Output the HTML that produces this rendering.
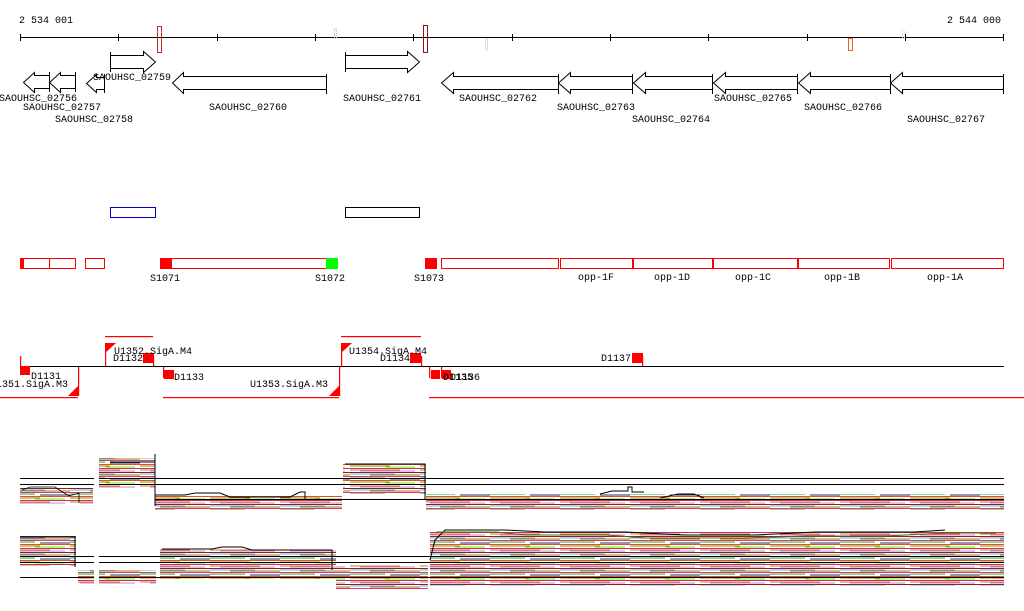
<!DOCTYPE html>
<html><head><meta charset="utf-8"><style>
html,body{margin:0;padding:0;background:#fff;width:1024px;height:611px;overflow:hidden}
svg text{font-family:"Liberation Mono","DejaVu Sans Mono",monospace;font-size:10px;fill:#000}
</style></head><body>
<svg width="1024" height="611" viewBox="0 0 1024 611" xmlns="http://www.w3.org/2000/svg">
<defs>
<pattern id="p1" width="70" height="16" patternUnits="userSpaceOnUse">
<rect width="70" height="16" fill="#fff"/>
<rect y="0" width="70" height="1" fill="#e0522a"/>
<rect y="1.5" width="40" height="1" fill="#8a8a00"/>
<rect x="35" y="2.5" width="30" height="1" fill="#6cf000"/>
<rect y="4" width="70" height="1" fill="#c0306a"/>
<rect y="5.5" width="50" height="1" fill="#e07030"/>
<rect x="10" y="6.5" width="55" height="1" fill="#d080c0"/>
<rect y="8" width="70" height="1" fill="#8b2020"/>
<rect y="9.5" width="45" height="1" fill="#60b0f0"/>
<rect x="20" y="10.5" width="50" height="1" fill="#a07020"/>
<rect y="12" width="70" height="1" fill="#e04060"/>
<rect y="13.5" width="35" height="1" fill="#30a030"/>
<rect x="40" y="14.5" width="30" height="1" fill="#203060"/>
</pattern>
</defs>

<!-- ruler -->
<text x="19" y="23">2 534 001</text>
<text x="947" y="23">2 544 000</text>
<line x1="20" y1="37.5" x2="1004" y2="37.5" stroke="#000"/>
<g stroke="#000">
<line x1="20.5" y1="34" x2="20.5" y2="41"/><line x1="118.5" y1="34" x2="118.5" y2="41"/><line x1="217.5" y1="34" x2="217.5" y2="41"/><line x1="315.5" y1="34" x2="315.5" y2="41"/><line x1="413.5" y1="34" x2="413.5" y2="41"/><line x1="512.5" y1="34" x2="512.5" y2="41"/><line x1="610.5" y1="34" x2="610.5" y2="41"/><line x1="708.5" y1="34" x2="708.5" y2="41"/><line x1="807.5" y1="34" x2="807.5" y2="41"/><line x1="905.5" y1="34" x2="905.5" y2="41"/><line x1="1003.5" y1="34" x2="1003.5" y2="41"/>
</g>
<rect x="157.5" y="26.5" width="4" height="26" fill="none" stroke="#c03020"/>
<rect x="423.5" y="25.5" width="4" height="27" fill="none" stroke="#901010"/>
<rect x="334.5" y="28.5" width="2" height="10" fill="none" stroke="#f8d0c0"/>
<rect x="485.5" y="38.5" width="2" height="11" fill="none" stroke="#f0d8d0"/>
<rect x="848.5" y="38.5" width="4" height="12" fill="none" stroke="#f06030"/>
<rect x="902.5" y="30.5" width="2" height="8" fill="none" stroke="#eee"/>

<!-- genes -->
<g fill="none" stroke="#000">
<path d="M110.5 52v20M110.5 55.5h33v-4l12 10.5l-12 10.5v-4h-33"/>
<path d="M326.5 74v20M326.5 76.5h-143v-4l-11 10.5l11 10.5v-4h143"/>
<path d="M49.5 72v20M49.5 75.5h-15v-3l-11 10l11 10v-4h15"/>
<path d="M75.5 72v20M75.5 75.5h-15v-3l-11 10l11 10v-4h15"/>
<path d="M104.5 74v19M104.5 77.5h-8v-3l-10 9l10 9v-3h8"/>
<path d="M345.5 52v20M345.5 55.5h62v-4l12 10.5l-12 10.5v-4h-62"/>
<path d="M558.5 74v20M558.5 76.5h-105v-4l-12 10.5l12 10.5v-4h105"/>
<path d="M632.5 74v20M632.5 76.5h-62v-4l-12 10.5l12 10.5v-4h62"/>
<path d="M712.5 74v20M712.5 76.5h-67v-4l-12 10.5l12 10.5v-4h67"/>
<path d="M797.5 74v20M797.5 76.5h-72v-4l-12 10.5l12 10.5v-4h72"/>
<path d="M890.5 74v20M890.5 76.5h-80v-4l-12 10.5l12 10.5v-4h80"/>
<path d="M1003.5 74v20M1003.5 76.5h-101v-4l-12 10.5l12 10.5v-4h101"/>
</g>
<text x="93" y="80">SAOUHSC_02759</text>
<text x="-1" y="101">SAOUHSC_02756</text>
<text x="23" y="110">SAOUHSC_02757</text>
<text x="55" y="122">SAOUHSC_02758</text>
<text x="209" y="110">SAOUHSC_02760</text>
<text x="343" y="101">SAOUHSC_02761</text>
<text x="459" y="101">SAOUHSC_02762</text>
<text x="557" y="110">SAOUHSC_02763</text>
<text x="632" y="122">SAOUHSC_02764</text>
<text x="714" y="101">SAOUHSC_02765</text>
<text x="804" y="110">SAOUHSC_02766</text>
<text x="907" y="122">SAOUHSC_02767</text>

<rect x="110.5" y="207.5" width="45" height="10" fill="none" stroke="#00c"/>
<rect x="345.5" y="207.5" width="74" height="10" fill="none" stroke="#000"/>

<!-- operon boxes -->
<g fill="none" stroke="#f00">
<rect x="20.5" y="258.5" width="29" height="10"/><rect x="49.5" y="258.5" width="26" height="10"/>
<rect x="85.5" y="258.5" width="19" height="10"/><rect x="160.5" y="258.5" width="177" height="10"/>
<rect x="441.5" y="258.5" width="117" height="10"/><rect x="560.5" y="258.5" width="72" height="10"/>
<rect x="633.5" y="258.5" width="79" height="10"/><rect x="713.5" y="258.5" width="84" height="10"/>
<rect x="798.5" y="258.5" width="91" height="10"/><rect x="891.5" y="258.5" width="112" height="10"/>
</g>
<rect x="20" y="258" width="4" height="11" fill="#f00"/>
<rect x="160" y="258" width="12" height="11" fill="#f00"/>
<rect x="326" y="258" width="12" height="11" fill="#0f0"/>
<rect x="425" y="258" width="12" height="11" fill="#f00"/>
<text x="150" y="281">S1071</text><text x="315" y="281">S1072</text><text x="414" y="281">S1073</text>
<text x="578" y="280">opp-1F</text><text x="654" y="280">opp-1D</text><text x="735" y="280">opp-1C</text><text x="824" y="280">opp-1B</text><text x="927" y="280">opp-1A</text>

<!-- TSS lane -->
<g fill="#f00">
<rect x="105" y="336" width="48" height="1.2"/><rect x="341" y="336" width="80" height="1.2"/>
<rect x="0" y="397" width="78" height="1.2"/><rect x="163" y="397" width="176" height="1.2"/><rect x="429" y="397" width="595" height="1.2"/>
<rect x="20" y="356" width="1.2" height="10"/><rect x="78" y="366" width="1.2" height="30"/>
<rect x="105" y="343" width="1.2" height="23"/><rect x="153" y="356" width="1.2" height="10"/>
<rect x="163" y="366" width="1.2" height="12"/><rect x="339" y="366" width="1.2" height="30"/>
<rect x="341" y="343" width="1.2" height="23"/><rect x="421" y="356" width="1.2" height="10"/>
<rect x="429" y="366" width="1.2" height="12"/><rect x="441" y="366" width="1.2" height="12"/>
<rect x="642" y="356" width="1.2" height="10"/>
</g>
<line x1="20" y1="366.5" x2="1004" y2="366.5" stroke="#000"/>
<g fill="#f00">
<rect x="20" y="366" width="10" height="9"/><rect x="143" y="353" width="11" height="10"/>
<rect x="164" y="370" width="10" height="9"/><rect x="410" y="353" width="11" height="10"/>
<rect x="632" y="353" width="11" height="10"/><rect x="431" y="370" width="9" height="9"/><rect x="442" y="370" width="9" height="9"/>
<path d="M105 343h11l-11 10z"/><path d="M341 343h11l-11 10z"/>
<path d="M78 386v10h-10z"/><path d="M339 386v10h-10z"/>
</g>
<text x="31" y="379">D1131</text><text x="113" y="361">D1132</text><text x="174" y="380">D1133</text>
<text x="380" y="361">D1134</text><text x="601" y="361">D1137</text><text x="443" y="380">D1135</text><text x="450" y="380">D1136</text>
<text x="-10" y="387">U1351.SigA.M3</text><text x="114" y="354">U1352.SigA.M4</text>
<text x="250" y="387">U1353.SigA.M3</text><text x="349" y="354">U1354.SigA.M4</text>

<!-- expression panel 1 -->
<g fill="url(#p1)">
<rect x="20" y="488" width="73" height="16"/>
<rect x="99" y="458" width="56" height="16"/><rect x="99" y="474" width="56" height="14"/>
<rect x="155" y="496" width="187" height="14"/>
<rect x="343" y="464" width="83" height="16"/><rect x="343" y="480" width="83" height="14"/>
<rect x="426" y="494" width="578" height="16"/>
</g>
<g fill="none" stroke="#000">
<line x1="20" y1="478.5" x2="94" y2="478.5"/><line x1="99" y1="478.5" x2="1004" y2="478.5"/>
<line x1="20" y1="484.5" x2="94" y2="484.5"/><line x1="99" y1="484.5" x2="1004" y2="484.5"/>
<line x1="155" y1="499.5" x2="1004" y2="499.5"/>
<path d="M22 490l8-3h25l6 4l8 5l10-3v10" stroke-width="0.8"/>
<path d="M110 462h45v-8v52" /><path d="M155 495h30l10-2h25l10 4h60l10-5h5v8"/>
<path d="M345 464h80v36"/><path d="M600 494l12-3h16v-4h4v5h12"/><path d="M660 498l18-4h16l10 4"/>
</g>
<!-- expression panel 2 -->
<g fill="url(#p1)">
<rect x="20" y="536" width="56" height="16"/><rect x="20" y="552" width="56" height="14"/>
<rect x="78" y="570" width="16" height="14"/><rect x="99" y="570" width="57" height="14"/>
<rect x="160" y="549" width="176" height="16"/><rect x="160" y="565" width="176" height="14"/>
<rect x="336" y="565" width="92" height="16"/><rect x="336" y="581" width="92" height="8"/>
<rect x="430" y="532" width="574" height="16"/><rect x="430" y="548" width="574" height="16"/><rect x="430" y="564" width="574" height="16"/><rect x="430" y="580" width="574" height="6"/>
</g>
<g fill="none" stroke="#000">
<line x1="20" y1="556.5" x2="94" y2="556.5"/><line x1="99" y1="556.5" x2="1004" y2="556.5"/>
<line x1="20" y1="562.5" x2="94" y2="562.5"/><line x1="99" y1="562.5" x2="1004" y2="562.5"/>
<line x1="20" y1="577.5" x2="94" y2="577.5"/><line x1="99" y1="577.5" x2="1004" y2="577.5"/>
<path d="M20 537h55v30"/><path d="M162 549h50l10 -2h20l10 3h80v20"/>
<path d="M430 560l5-20l10-10h60l40 2h80l60 3h70l60-3h100l30-2"/>
<path d="M436 532h60l30 3h80l40 3h100l60-2h80l60-3h50" stroke="#556b00"/>
</g>
</svg>
</body></html>
